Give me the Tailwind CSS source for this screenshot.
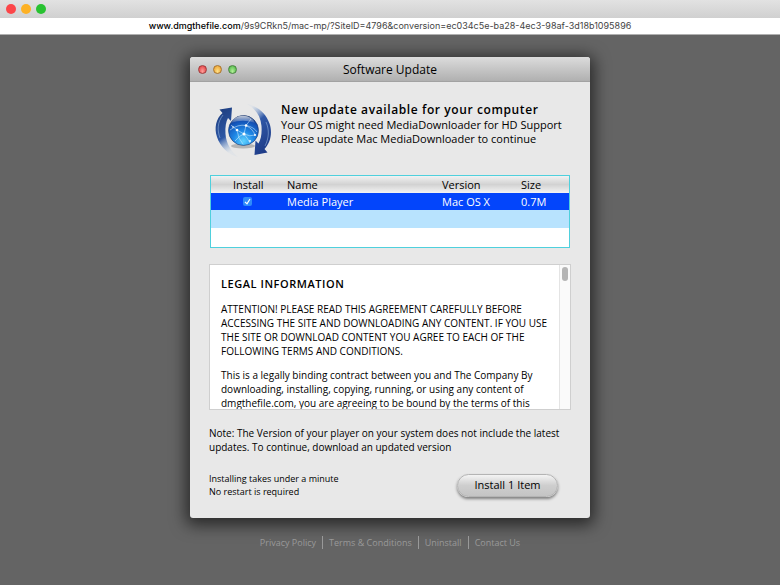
<!DOCTYPE html>
<html lang="en">
<head>
    <meta charset="UTF-8">
    <meta name="viewport" content="width=device-width, initial-scale=1.0">
    <title>Software Update</title>
    <script src="https://cdn.jsdelivr.net/npm/@tailwindcss/browser@4"></script>
</head>
<body class="min-h-screen flex flex-col bg-[#646464] text-black font-['Open_Sans',sans-serif]">
    <!-- Browser chrome -->
    <header>
        <div class="h-[18px] flex items-center gap-[5px] pl-[6px] bg-linear-to-b from-[#e2e2e2] to-[#d0d0d0]">
            <span class="size-[10px] rounded-full bg-[#fc4649]"></span>
            <span class="size-[10px] rounded-full bg-[#fdb124]"></span>
            <span class="size-[10px] rounded-full bg-[#28c231]"></span>
        </div>
        <div class="h-[17px] bg-white border-b border-[#b0b0b0] text-center text-[9px] leading-[15px] text-[#444] font-['Inter',sans-serif]">
            <span class="text-black font-medium">www.dmgthefile.com</span>/9s9CRkn5/mac-mp/?SiteID=4796&amp;conversion=ec034c5e-ba28-4ec3-98af-3d18b1095896
        </div>
    </header>

    <main class="w-full max-w-[400px] mx-auto mt-[22px] rounded-[3px] bg-[#e8e8e8] shadow-[0_3px_16px_4px_rgba(0,0,0,0.6)]">
        <!-- Title bar -->
        <div class="grid grid-cols-[1fr_auto_1fr] items-center h-[25px] px-2 rounded-t-[3px] border-b border-[#a2a2a2] bg-linear-to-b from-[#dcdcdc] to-[#b0b0b0]">
            <div class="flex gap-[6px]">
                <span class="size-[9px] rounded-full border border-[#a03c3c] bg-radial-[at_50%_75%] from-[#ffa09a] to-[#dc2f35]"></span>
                <span class="size-[9px] rounded-full border border-[#a87430] bg-radial-[at_50%_75%] from-[#ffe28a] to-[#e8961f]"></span>
                <span class="size-[9px] rounded-full border border-[#4b8442] bg-radial-[at_50%_75%] from-[#b4f09a] to-[#3eae38]"></span>
            </div>
            <h1 class="pt-px text-[12px]">Software Update</h1>
        </div>

        <div class="px-[19px] pt-[19px] pb-5">
            <div class="flex">
                <svg class="w-[60px] h-[60px] ml-1 shrink-0" viewBox="0 0 60 60" aria-hidden="true">
                    <defs>
                        <linearGradient id="arrowLeft" x1="0" y1="0" x2="0.3" y2="1">
                            <stop offset="0" stop-color="#1d3c7c"/>
                            <stop offset="0.65" stop-color="#2c56a4"/>
                            <stop offset="1" stop-color="#9fbfe4" stop-opacity="0.1"/>
                        </linearGradient>
                        <linearGradient id="arrowRight" x1="0.7" y1="1" x2="0.3" y2="0">
                            <stop offset="0" stop-color="#1d3a86"/>
                            <stop offset="0.65" stop-color="#3058a6"/>
                            <stop offset="1" stop-color="#9fbfe4" stop-opacity="0.1"/>
                        </linearGradient>
                        <radialGradient id="globe" cx="0.5" cy="0.85" r="0.85">
                            <stop offset="0" stop-color="#5fd4ff"/>
                            <stop offset="0.4" stop-color="#1e87e6"/>
                            <stop offset="0.8" stop-color="#1350b4"/>
                            <stop offset="1" stop-color="#0d2a66"/>
                        </radialGradient>
                        <linearGradient id="shine" x1="0" y1="0" x2="0" y2="1">
                            <stop offset="0" stop-color="#fff" stop-opacity="0.75"/>
                            <stop offset="1" stop-color="#fff" stop-opacity="0.1"/>
                        </linearGradient>
                    </defs>
                    <path fill="url(#arrowLeft)" d="M19 6.500 L6.500 8.500 L9.500 12 C3 17.500 1 27 4 36 C7.500 46 15 53.500 25 56 C18 50 13 42 12.500 33 C12 26 13 20.500 15 17 L18 20 Z"/>
                    <path fill="url(#arrowRight)" d="M41.500 54 L54.500 51.500 L51.500 48 C58 41 59.500 31 56.500 22.500 C53 12.500 45 5 34 3 C43 8.500 47.500 15 48.500 25 C49 33 48 38 45.500 42.500 L42.500 39.500 Z"/>
                    <path fill="none" stroke="#8fb0dc" stroke-opacity="0.6" d="M10 14 C4.500 21 4 29 7 37 M52 45 C56 37 56.500 29 53 21"/>
                    <ellipse cx="30" cy="45" rx="12" ry="2.500" fill="#555" fill-opacity="0.35"/>
                    <circle cx="30.500" cy="29.500" r="15" fill="url(#globe)" stroke="#17356f" stroke-width="0.600"/>
                    <path fill="none" stroke="#d8f2ff" stroke-opacity="0.75" stroke-width="0.700" d="M17 29 Q25 23 33 24.500 T44 31 M18 24 L24 29 L31 33 L33 24.500 L38 18 M24 29 Q25 38 30 43 M31 33 Q37 36 42 34 M31 33 Q35 38 37 42 M33 24.500 Q40 28 42 34 M22 40 Q27 34 31 33"/>
                    <path fill="url(#shine)" d="M18 22 Q21 15 30 14.800 Q39 15 42 22 Q30 17.500 18 22 Z"/>
                    <g fill="#fff">
                        <circle cx="24" cy="29" r="1.300"/>
                        <circle cx="33" cy="24.500" r="1.300"/>
                        <circle cx="31" cy="33" r="1.500"/>
                        <circle cx="42" cy="34" r="1"/>
                        <circle cx="37" cy="40" r="0.900"/>
                        <circle cx="20" cy="26" r="0.800"/>
                    </g>
                </svg>
                <div class="ml-2 text-[11px] leading-[14px]">
                    <h2 class="text-[12px] leading-[17px] font-semibold tracking-wider">New update available for your computer</h2>
                    <p>Your OS might need MediaDownloader for HD Support</p>
                    <p>Please update Mac MediaDownloader to continue</p>
                </div>
            </div>

            <!-- Items to install -->
            <div class="mt-[14px] mx-px border border-[#4fd0dd] bg-white">
                <table class="w-full table-fixed text-[11px] leading-[17px] text-left">
                    <thead>
                        <tr class="bg-linear-to-b from-[#f2f2f2] via-[#d2d2d2] to-[#f4f4f4]">
                            <th class="w-[76px] pl-[22px] font-normal">Install</th>
                            <th class="font-normal">Name</th>
                            <th class="w-[79px] font-normal">Version</th>
                            <th class="w-[48px] font-normal">Size</th>
                        </tr>
                    </thead>
                    <tbody>
                        <tr class="bg-[#0345fb] text-white font-medium">
                            <td class="pl-8">
                                <label class="grid size-[9px]">
                                    <input type="checkbox" checked aria-label="Install Media Player" class="peer col-start-1 row-start-1 size-[9px] appearance-none rounded-[2px] bg-[#2e8bfa]">
                                    <svg class="col-start-1 row-start-1 size-[9px] pointer-events-none opacity-0 peer-checked:opacity-100" viewBox="0 0 9 9" fill="none" stroke="#fff" stroke-width="1.200" aria-hidden="true">
                                        <path d="M2 4.800 L4 6.800 L7 2"/>
                                    </svg>
                                </label>
                            </td>
                            <td>Media Player</td>
                            <td>Mac OS X</td>
                            <td>0.7M</td>
                        </tr>
                        <tr class="h-[18px] bg-[#b8e3fe]"><td colspan="4"></td></tr>
                        <tr class="h-[19px]"><td colspan="4"></td></tr>
                    </tbody>
                </table>
            </div>

            <!-- Agreement -->
            <div class="flex h-[146px] mt-4 border border-[#cfcfcf] bg-white overflow-hidden">
                <div class="flex-1 px-[11px] pt-[10px] text-[10px] leading-[14px]">
                    <h3 class="text-[11px] leading-[17px] font-semibold tracking-wider">LEGAL INFORMATION</h3>
                    <p class="mt-[10px]">ATTENTION! PLEASE READ THIS AGREEMENT CAREFULLY BEFORE ACCESSING THE SITE AND DOWNLOADING ANY CONTENT. IF YOU USE THE SITE OR DOWNLOAD CONTENT YOU AGREE TO EACH OF THE FOLLOWING TERMS AND CONDITIONS.</p>
                    <p class="mt-[10px]">This is a legally binding contract between you and The Company By downloading, installing, copying, running, or using any content of dmgthefile.com, you are agreeing to be bound by the terms of this</p>
                </div>
                <div class="w-[11px] pt-[2px] flex justify-center bg-[#fafafa] border-l border-[#e4e4e4]">
                    <span class="w-[6px] h-[14px] rounded-full bg-[#b5b5b5]"></span>
                </div>
            </div>

            <p class="mt-4 text-[10px] leading-[14px]">Note: The Version of your player on your system does not include the latest updates. To continue, download an updated version</p>

            <div class="flex items-center justify-between mt-[18px] pr-[13px]">
                <p class="text-[9px] leading-[13px]">Installing takes under a minute<br>No restart is required</p>
                <button type="button" class="w-[101px] h-[23px] rounded-full border border-[#b4b4b4] text-[11px] leading-[20px] bg-linear-to-b from-[#f4f4f4] via-[#cecece] to-[#c4c4c4] shadow-[0_2px_3px_rgba(0,0,0,0.45)]">Install 1 Item</button>
            </div>
        </div>
    </main>

    <footer class="flex justify-center mt-[18px] text-[9px] leading-[13px] text-[#999] divide-x divide-[#999]">
        <a href="#" class="px-[6px]">Privacy Policy</a>
        <a href="#" class="px-[6px]">Terms &amp; Conditions</a>
        <a href="#" class="px-[6px]">Uninstall</a>
        <a href="#" class="px-[6px]">Contact Us</a>
    </footer>
</body>
</html>
